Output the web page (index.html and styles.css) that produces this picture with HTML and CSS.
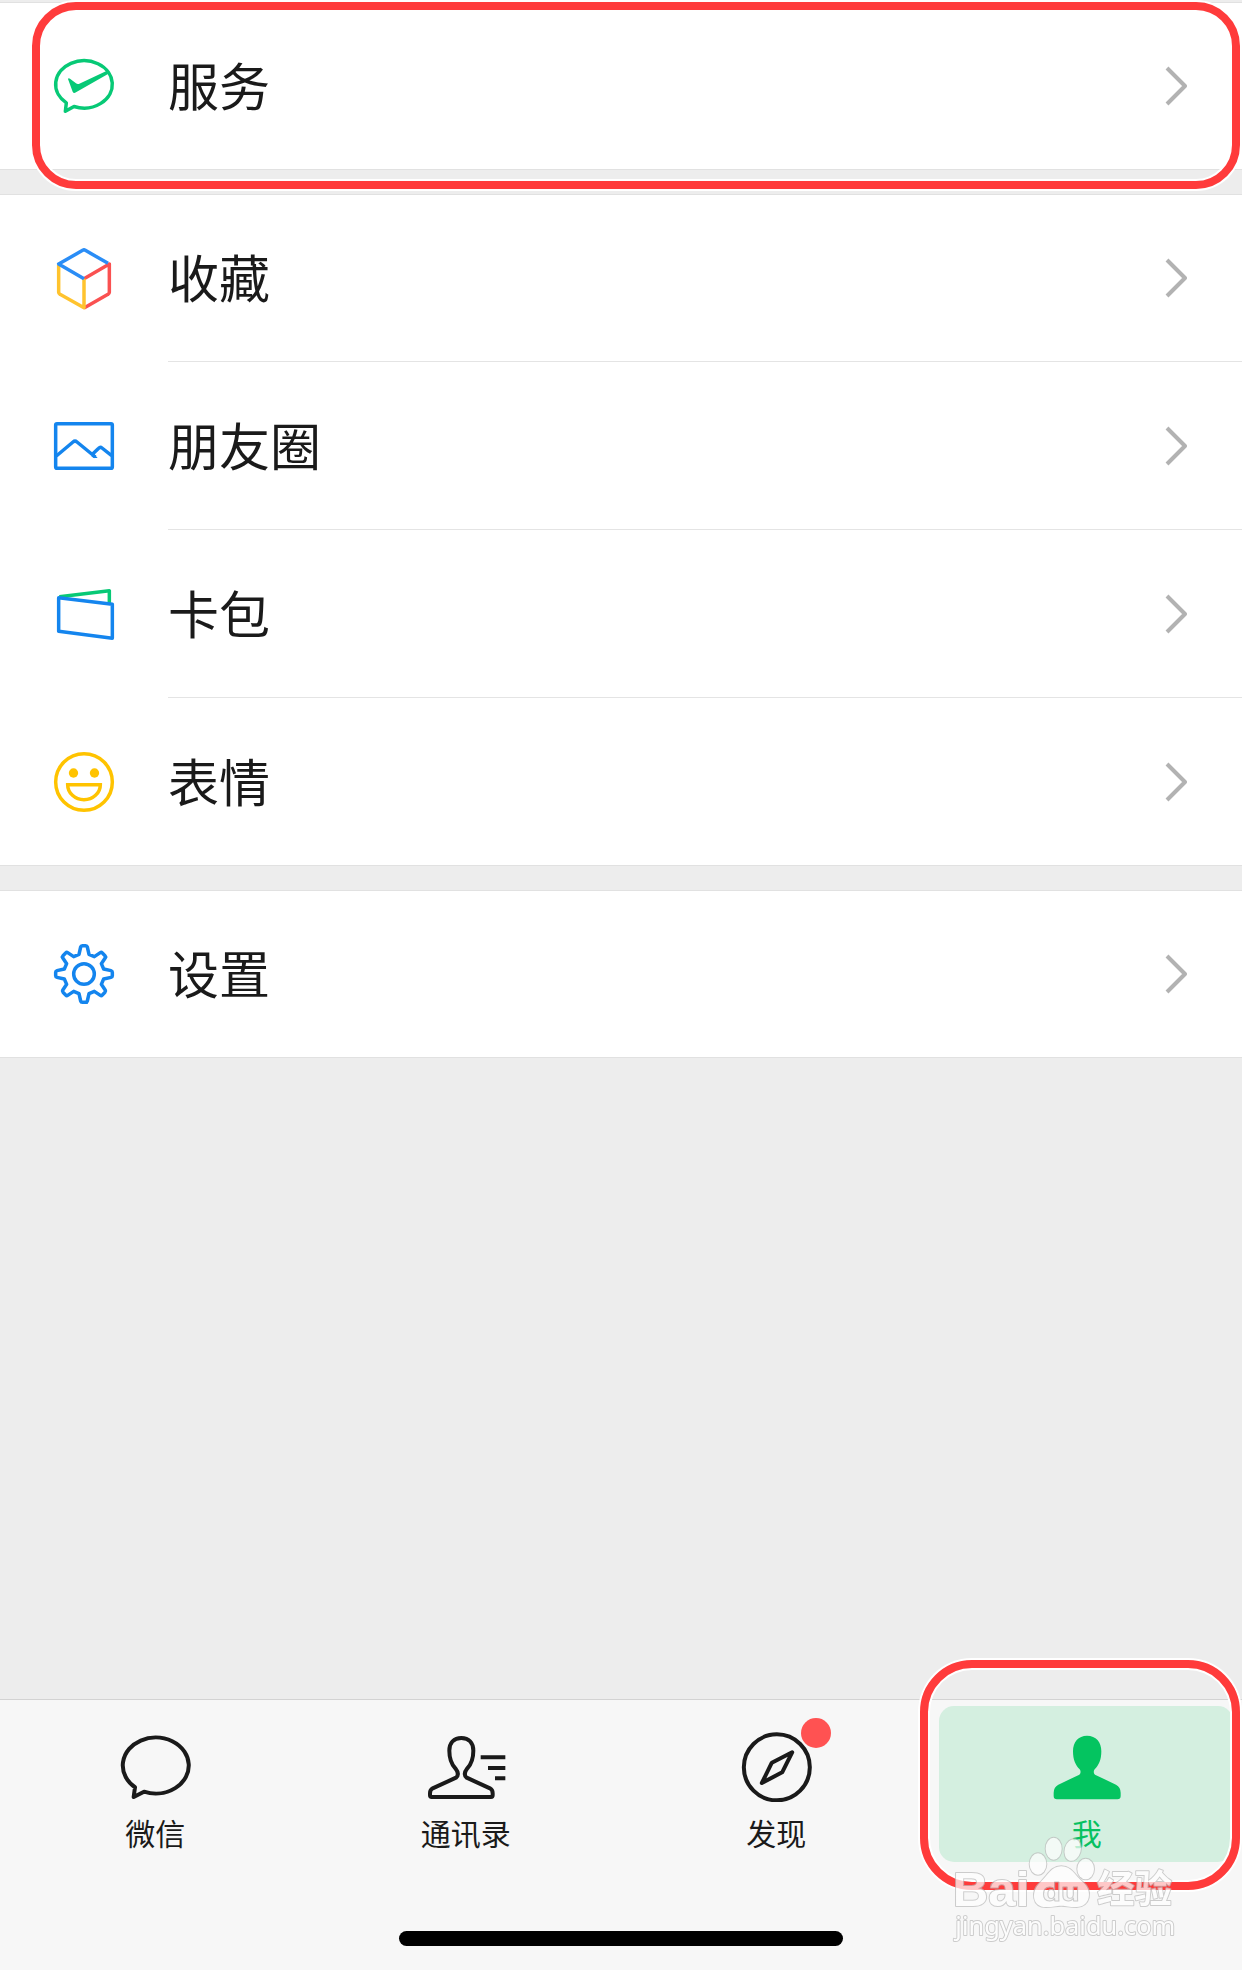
FILE: index.html
```html
<!DOCTYPE html>
<html lang="zh-CN">
<head>
    <meta charset="UTF-8">
    <meta name="viewport" content="width=device-width, initial-scale=1.0">
    <title>我</title>
    <link rel="stylesheet" href="styles.css">
</head>
<body>

    <div class="page">
        <div class="menu">
            <ul class="group">
                <li class="row">
                    <svg class="icon green" viewBox="0 0 180 180">
                        <path d="M60 151.4A85 71 0 1 0 37 140.5L34 166Z"/>
                        <path class="fill" d="M42 69Q43 65 48 68L66 82Q70 85 76 83L162 43L166 52L66 109Q59 114 56 107Z"/>
                    </svg>
                    <span class="label">服务</span>
                    <svg class="arrow" viewBox="0 0 22 40"><path d="M2 2L20 20L2 38"/></svg>
                </li>
            </ul>

            <ul class="group">
                <li class="row">
                    <svg class="icon" viewBox="0 0 180 180">
                        <path stroke="#fa5151" d="M90 92L166 48V133Q166 137 162 139L90 180"/>
                        <path stroke="#ffc32e" d="M14 50V133Q14 137 18 139L90 179V92"/>
                        <path stroke="#2a8df6" d="M162 46L94 7Q90 4 86 7L14 48L90 92"/>
                    </svg>
                    <span class="label">收藏</span>
                    <svg class="arrow" viewBox="0 0 22 40"><path d="M2 2L20 20L2 38"/></svg>
                </li>
                <li class="row">
                    <svg class="icon blue" viewBox="0 0 180 180">
                        <rect x="5" y="23" width="170" height="134" rx="4"/>
                        <path stroke-linejoin="miter" stroke-linecap="butt" d="M7 120L57 78Q63 73 69 78L124 123M112 118L134 97Q139 92 144 96L173 119"/>
                        <path class="fill" d="M112 121L120 113L131 126H119Z"/>
                    </svg>
                    <span class="label">朋友圈</span>
                    <svg class="arrow" viewBox="0 0 22 40"><path d="M2 2L20 20L2 38"/></svg>
                </li>
                <li class="row">
                    <svg class="icon blue" viewBox="0 0 180 180">
                        <path stroke="#07c976" stroke-linecap="butt" d="M16 38L166 20V58"/>
                        <path d="M14 41L175 61V163L14 142Z"/>
                    </svg>
                    <span class="label">卡包</span>
                    <svg class="arrow" viewBox="0 0 22 40"><path d="M2 2L20 20L2 38"/></svg>
                </li>
                <li class="row">
                    <svg class="icon yellow" viewBox="0 0 180 180">
                        <circle cx="90" cy="90" r="85"/>
                        <circle class="fill" cx="58.5" cy="63" r="14"/>
                        <circle class="fill" cx="121.5" cy="63" r="14"/>
                        <path stroke-linejoin="miter" d="M41 98H139A49 45 0 0 1 41 98Z"/>
                    </svg>
                    <span class="label">表情</span>
                    <svg class="arrow" viewBox="0 0 22 40"><path d="M2 2L20 20L2 38"/></svg>
                </li>
            </ul>

            <ul class="group">
                <li class="row">
                    <svg class="icon blue" viewBox="0 0 180 180">
                        <circle cx="90" cy="90" r="31"/>
                        <path d="M75 31L80 9Q81 5 85 5H95Q99 5 100 9L105 31L121 38L139 26Q142 24 145 27L153 35Q156 38 154 41L142 59L149 75L171 80Q175 81 175 85V95Q175 99 171 100L149 105L142 121L154 139Q156 142 153 145L145 153Q142 156 139 154L121 142L105 149L100 171Q99 175 95 175H85Q81 175 80 171L75 149L59 142L41 154Q38 156 35 153L27 145Q24 142 26 139L38 121L31 105L9 100Q5 99 5 95V85Q5 81 9 80L31 75L38 59L26 41Q24 38 27 35L35 27Q38 24 41 26L59 38Z"/>
                    </svg>
                    <span class="label">设置</span>
                    <svg class="arrow" viewBox="0 0 22 40"><path d="M2 2L20 20L2 38"/></svg>
                </li>
            </ul>
        </div>

        <div class="tabbar">
            <div class="tab">
                <svg class="tab-icon" viewBox="0 0 240 216">
                    <path d="M87 185A99 84 0 1 0 60 171.8L56 201Z"/>
                </svg>
                <span>微信</span>
            </div>
            <div class="tab">
                <svg class="tab-icon" viewBox="0 0 240 216">
                    <path d="M106 24C84 24 70 38 70 62C70 88 77 103 88 115Q102 133 90 143L20 175Q12 179 12 190V196Q12 201 17 201H195Q200 201 200 196V190Q200 179 192 175L122 143Q110 133 124 115C135 103 142 88 142 62C142 38 128 24 106 24Z"/>
                    <path stroke-linecap="butt" d="M164 82H238M186 114H238M207 145H238"/>
                </svg>
                <span>通讯录</span>
            </div>
            <div class="tab">
                <svg class="tab-icon" viewBox="0 0 240 216">
                    <circle cx="122.5" cy="112" r="99"/>
                    <path d="M168.5 67L107.5 98L77.5 159L138.5 127Z"/>
                </svg>
                <i class="dot"></i>
                <span>发现</span>
            </div>
            <div class="tab active">
                <svg class="tab-icon" viewBox="0 0 240 216">
                    <path d="M120 17C94 17 78 36 78 64C78 90 86 106 98 118Q104 127 97 134L34 164Q20 172 20 188V198Q20 208 30 208H211Q221 208 221 198V188Q221 172 207 164L144 134Q137 127 143 118C155 106 163 90 163 64C163 36 147 17 120 17Z"/>
                </svg>
                <span>我</span>
            </div>
            <div class="home-bar"></div>
        </div>

        <div class="mark mark-service"></div>
        <div class="mark mark-me"></div>

        <svg class="watermark" viewBox="150 570 690 348">
            <!-- letters are cut out of the paw -->
            <mask id="duMask" maskUnits="userSpaceOnUse" x="150" y="570" width="690" height="348">
                <rect x="150" y="570" width="690" height="348" fill="white" stroke="none"/>
                <text class="brand" fill="black" stroke="none" x="427" y="782" font-size="80" textLength="112" lengthAdjust="spacingAndGlyphs">du</text>
            </mask>
            <ellipse cx="414" cy="672" rx="25" ry="32"/>
            <ellipse cx="461" cy="626" rx="24" ry="33"/>
            <ellipse cx="518" cy="630" rx="24" ry="33" transform="rotate(15 518 630)"/>
            <ellipse cx="557" cy="687" rx="25" ry="31"/>
            <path mask="url(#duMask)" d="M484 679C515 679 524 706 548 726C580 752 570 801 530 801C505 801 500 797 484 797C468 797 460 801 438 801C396 801 392 754 420 728C444 706 453 679 484 679Z"/>
            <text class="brand" x="158" y="797" font-size="144" textLength="230" lengthAdjust="spacingAndGlyphs">Bai</text>
            <text class="brand du" x="427" y="782" font-size="80" textLength="112" lengthAdjust="spacingAndGlyphs">du</text>
            <text class="brand" x="591" y="787" font-size="114" textLength="225" lengthAdjust="spacingAndGlyphs">经验</text>
            <text class="site" x="166" y="886" font-size="78" textLength="660" lengthAdjust="spacingAndGlyphs">jingyan.baidu.com</text>
        </svg>
    </div>

</body>
</html>
```
FILE: styles.css
```css
* {
    box-sizing: border-box;
}

body {
    margin: 0;
    background-color: #ededed;
    color: #1a1a1a;
    font-family: "Noto Sans CJK SC", sans-serif;
}

.page {
    position: relative;
    display: flex;
    flex-direction: column;
    width: 1242px;
    height: 1970px;
    overflow: hidden;
}

.menu {
    display: flex;
    flex-direction: column;
    flex: 1;
    gap: 24px;
    padding-top: 2px;
}

.group {
    list-style: none;
    margin: 0;
    padding: 0;
    background-color: white;
    border-top: 1px solid #e1e1e1;
    border-bottom: 1px solid #e1e1e1;
}

.row {
    display: flex;
    align-items: center;
    height: 168px;
    padding: 0 55px 1px 54px;
    /* divider starts at the label */
    background: linear-gradient(#e4e4e4, #e4e4e4) 168px 100% / 100% 1px no-repeat;
}

.row:first-child {
    height: 167px;
}

.row:last-child {
    height: 167px;
    background: none;
    padding-bottom: 0;
}

.row:only-child {
    height: 166px;
}

.icon {
    width: 60px;
    height: 60px;
    overflow: visible;
    fill: none;
    stroke-width: 10.5;
    stroke-linejoin: round;
}

.green {
    stroke: #07c976;
    color: #07c976;
}

.blue {
    stroke: #1485ee;
    color: #1485ee;
}

.yellow {
    stroke: #ffc300;
    color: #ffc300;
}

.icon .fill {
    fill: currentColor;
    stroke: none;
}

.label {
    flex: 1;
    margin-left: 54px;
    padding-bottom: 4px;
    font-size: 51px;
    line-height: 72px;
}

.arrow {
    width: 22px;
    height: 40px;
    fill: none;
    stroke: #b2b2b2;
    stroke-width: 4;
    stroke-linejoin: round;
}

/* Tab bar */
.tabbar {
    position: relative;
    display: flex;
    height: 271px;
    background-color: #f7f7f7;
    border-top: 1px solid #d3d3d3;
}

.tab {
    position: relative;
    display: flex;
    flex: 1;
    flex-direction: column;
    align-items: center;
    gap: 12px;
    padding-top: 30px;
    font-size: 30px;
    line-height: 36px;
}

.tab-icon {
    width: 80px;
    height: 72px;
    fill: none;
    stroke: #1a1a1a;
    stroke-width: 12;
    stroke-linejoin: round;
}

.dot {
    position: absolute;
    top: 18px;
    left: 180px;
    width: 30px;
    height: 30px;
    border-radius: 50%;
    background-color: #ff5252;
}

.active {
    color: #07c160;
}

.active::before {
    content: "";
    position: absolute;
    top: 6px;
    left: 7px;
    width: 294px;
    height: 156px;
    border-radius: 15px;
    background-color: #d4efe0;
}

.active .tab-icon {
    position: relative;
    fill: #04c460;
    stroke: none;
}

.active span {
    position: relative;
}

.home-bar {
    position: absolute;
    left: 399px;
    bottom: 24px;
    width: 444px;
    height: 15px;
    border-radius: 8px;
    background-color: black;
}

/* Red highlight frames */
.mark {
    position: absolute;
    border: 8px solid #ff3b3b;
    box-shadow: 0 0 0 2px white, inset 0 0 0 2px white;
}

.mark-service {
    left: 32px;
    top: 2px;
    width: 1208px;
    height: 187px;
    border-radius: 44px;
}

.mark-me {
    left: 920px;
    top: 1660px;
    width: 320px;
    height: 230px;
    border-radius: 52px;
}

.watermark {
    position: absolute;
    left: 950px;
    top: 1830px;
    width: 230px;
    height: 116px;
    fill: white;
    stroke: #bcbcbc;
    stroke-width: 6;
    stroke-linejoin: round;
    paint-order: stroke;
    opacity: 0.72;
}

.brand {
    font-family: "Liberation Sans", "Noto Sans CJK SC", sans-serif;
    font-weight: bold;
}

.du {
    fill: none;
    stroke-width: 3;
}

.site {
    font-family: "Noto Sans", sans-serif;
}
```
